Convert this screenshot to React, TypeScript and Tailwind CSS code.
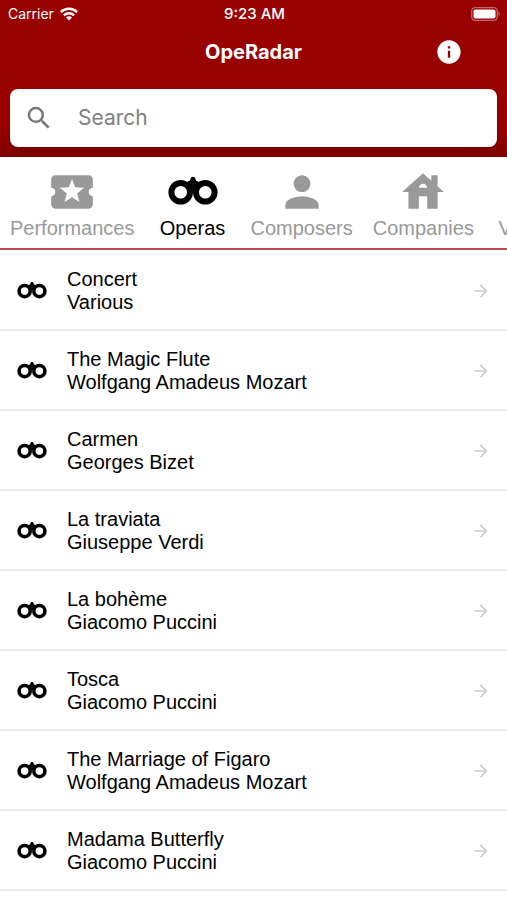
import React, { useState } from "react";
import {
  MdArrowForward,
  MdHouse,
  MdInfo,
  MdLocalActivity,
  MdPerson,
  MdPlace,
  MdSearch,
} from "react-icons/md";

interface Opera {
  id: number;
  title: string;
  composer: string;
}

interface IconProps {
  className?: string;
}

interface Tab {
  name: string;
  Icon: React.ComponentType<IconProps>;
}

const operas: Opera[] = [
  { id: 1, title: "Concert", composer: "Various" },
  { id: 2, title: "The Magic Flute", composer: "Wolfgang Amadeus Mozart" },
  { id: 3, title: "Carmen", composer: "Georges Bizet" },
  { id: 4, title: "La traviata", composer: "Giuseppe Verdi" },
  { id: 5, title: "La bohème", composer: "Giacomo Puccini" },
  { id: 6, title: "Tosca", composer: "Giacomo Puccini" },
  { id: 7, title: "The Marriage of Figaro", composer: "Wolfgang Amadeus Mozart" },
  { id: 8, title: "Madama Butterfly", composer: "Giacomo Puccini" },
];

const OperaGlasses: React.FC<IconProps> = ({ className }) => (
  <svg viewBox="0 0 50 50" className={className} aria-hidden="true">
    <g fill="none" stroke="currentColor" strokeWidth="6">
      <circle cx="12.7" cy="25.2" r="9.3" />
      <circle cx="37.3" cy="25.2" r="9.3" />
    </g>
    <path
      fill="currentColor"
      d="M22.400 12.200c.4-1.600 1.300-2.400 2.600-2.400s2.200.8 2.600 2.400l.5 1.600c1.500.3 2.600 1 3.400 2.200L34 17.500l-6 8.500c-.8-1.700-1.800-2.500-3-2.500s-2.200.8-3 2.500l-6-8.500 2.500-1.500c.8-1.200 1.900-1.900 3.400-2.200z"
    />
  </svg>
);

const tabs: Tab[] = [
  { name: "Performances", Icon: MdLocalActivity },
  { name: "Operas", Icon: OperaGlasses },
  { name: "Composers", Icon: MdPerson },
  { name: "Companies", Icon: MdHouse },
  { name: "Venues", Icon: MdPlace },
];

const StatusBar: React.FC = () => (
  <div className="grid h-7 grid-cols-[1fr_auto_1fr] items-center pr-1.5 pl-2 font-['Inter',sans-serif] text-sm">
    <div className="flex items-center gap-1.5">
      <span>Carrier</span>
      <svg viewBox="0 0 18 14" className="h-3.5 w-[18px]" aria-hidden="true">
        <g fill="none" stroke="currentColor" strokeWidth="2.5">
          <path d="M.9 5.200a11.500 11.500 0 0 1 16.200 0" />
          <path d="M3.900 8.300a7.300 7.300 0 0 1 10.200 0" />
        </g>
        <path fill="currentColor" d="M9 13.600 5.900 10.500a4.400 4.400 0 0 1 6.200 0z" />
      </svg>
    </div>
    <span className="text-[15px] font-medium">9:23 AM</span>
    <svg
      viewBox="0 0 30 14"
      className="h-3.5 w-[30px] justify-self-end"
      aria-hidden="true"
    >
      <rect
        x=".7"
        y=".7"
        width="25.600"
        height="12.600"
        rx="3.600"
        fill="none"
        stroke="currentColor"
        strokeOpacity=".4"
        strokeWidth="1.300"
      />
      <rect x="2.500" y="2.500" width="22" height="9" rx="2" fill="currentColor" />
      <path d="M27.500 4.800a2.400 2.400 0 0 1 0 4.400z" fill="currentColor" fillOpacity=".4" />
    </svg>
  </div>
);

const App: React.FC = () => {
  const [activeTab, setActiveTab] = useState("Operas");
  const [query, setQuery] = useState("");

  const visible = operas.filter((opera) =>
    (opera.title + " " + opera.composer)
      .toLowerCase()
      .includes(query.toLowerCase())
  );

  return (
    <div className="min-h-screen overflow-hidden bg-white font-['Liberation_Sans',Arial,sans-serif] text-black">
      <header className="bg-[#990000] text-white">
        <StatusBar />
        <div className="grid h-12 grid-cols-[1fr_auto_1fr] items-center">
          <h1 className="col-start-2 font-['Inter',sans-serif] text-xl font-bold">
            OpeRadar
          </h1>
          <button
            aria-label="About"
            className="mr-11 justify-self-end"
          >
            <MdInfo className="size-7" />
          </button>
        </div>
        <div className="bg-linear-to-b from-[#990000] from-60% to-[#800000] px-2.5 pt-[13px] pb-2.5">
          <label className="flex h-[58px] items-center gap-6 rounded-lg bg-white px-3.5 shadow-md">
            <MdSearch className="size-[30px] shrink-0 text-[#757575]" />
            <input
              type="text"
              aria-label="Search"
              placeholder="Search"
              value={query}
              onChange={(e) => setQuery(e.target.value)}
              className="min-w-0 flex-1 font-['Inter',sans-serif] text-[21px] text-black outline-none placeholder:text-[#808080]"
            />
          </label>
        </div>
      </header>

      <nav className="flex overflow-hidden border-b-2 border-[#b84a50] pt-2.5 pb-2">
        {tabs.map(({ name, Icon }) => (
          <button
            key={name}
            onClick={() => setActiveTab(name)}
            className={`flex min-w-24 shrink-0 flex-col items-center px-2.5 text-xl leading-[23px] ${
              activeTab === name ? "text-black" : "text-[#999999]"
            }`}
          >
            <Icon className="size-[50px]" />
            {name}
          </button>
        ))}
      </nav>

      <ul className="pt-px">
        {visible.map((opera) => (
          <li key={opera.id} className="border-b-2 border-[#ececec]">
            <a href="#" className="flex items-center pt-[17px] pr-4 pb-[15px] pl-[17px]">
              <OperaGlasses className="size-[30px] shrink-0" />
              <div className="ml-5 min-w-0 flex-1 text-xl leading-[23px]">
                <div>{opera.title}</div>
                <div>{opera.composer}</div>
              </div>
              <MdArrowForward className="size-5 shrink-0 text-[#cccccc]" />
            </a>
          </li>
        ))}
      </ul>
    </div>
  );
};

export default App;
